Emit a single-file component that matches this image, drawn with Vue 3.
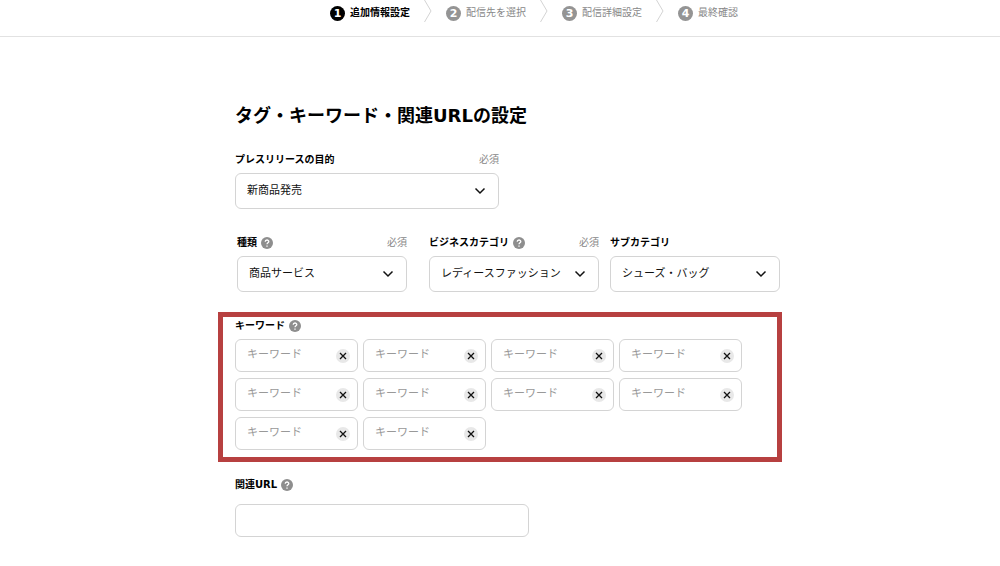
<script setup>
import { ref } from 'vue'

const steps = ['追加情報設定', '配信先を選択', '配信詳細設定', '最終確認']
const keywords = ref(Array.from({ length: 10 }, () => ''))
const url = ref('')

function clearKeyword(index) {
  keywords.value[index] = ''
}
</script>

<template>
  <div class="page">
    <header class="header">
      <ol class="steps">
        <li v-for="(step, i) in steps" :key="step" class="step" :class="{ current: i === 0 }">
          <svg v-if="i > 0" class="separator" viewBox="0 0 8 22" aria-hidden="true">
            <path d="M0.5 0 7 11 0.5 22" />
          </svg>
          <span class="number">{{ i + 1 }}</span>
          <span>{{ step }}</span>
        </li>
      </ol>
    </header>

    <main class="content">
      <h1 class="title">タグ・キーワード・関連URLの設定</h1>

      <div class="field purpose">
        <div class="label-row">
          <label for="purpose">プレスリリースの目的</label>
          <span class="required">必須</span>
        </div>
        <div class="select-box">
          <select id="purpose"><option>新商品発売</option></select>
          <svg class="chevron" viewBox="0 0 12 8" aria-hidden="true"><path d="M1.5 1.5 6 6 10.5 1.5" /></svg>
        </div>
      </div>

      <div class="categories">
        <div class="field">
          <div class="label-row">
            <label for="kind">種類</label>
            <button class="help" type="button" aria-label="種類のヘルプ">
              <svg viewBox="0 0 12 12"><circle cx="6" cy="6" r="6" /><path d="M4.2 4.8C4.2 2.4 7.8 2.5 7.8 4.6 7.8 5.8 6 5.9 6 7.3M6 8.4V9.7" /></svg>
            </button>
            <span class="required">必須</span>
          </div>
          <div class="select-box">
            <select id="kind"><option>商品サービス</option></select>
            <svg class="chevron" viewBox="0 0 12 8" aria-hidden="true"><path d="M1.5 1.5 6 6 10.5 1.5" /></svg>
          </div>
        </div>
        <div class="category-pair">
          <div class="field">
            <div class="label-row">
              <label for="business">ビジネスカテゴリ</label>
              <button class="help" type="button" aria-label="ビジネスカテゴリのヘルプ">
                <svg viewBox="0 0 12 12"><circle cx="6" cy="6" r="6" /><path d="M4.2 4.8C4.2 2.4 7.8 2.5 7.8 4.6 7.8 5.8 6 5.9 6 7.3M6 8.4V9.7" /></svg>
              </button>
              <span class="required">必須</span>
            </div>
            <div class="select-box">
              <select id="business"><option>レディースファッション</option></select>
              <svg class="chevron" viewBox="0 0 12 8" aria-hidden="true"><path d="M1.5 1.5 6 6 10.5 1.5" /></svg>
            </div>
          </div>
          <div class="field">
            <div class="label-row"><label for="sub">サブカテゴリ</label></div>
            <div class="select-box">
              <select id="sub"><option>シューズ・バッグ</option></select>
              <svg class="chevron" viewBox="0 0 12 8" aria-hidden="true"><path d="M1.5 1.5 6 6 10.5 1.5" /></svg>
            </div>
          </div>
        </div>
      </div>

      <section class="field keywords">
        <div class="label-row">
          <label for="keyword-0">キーワード</label>
          <button class="help" type="button" aria-label="キーワードのヘルプ">
            <svg viewBox="0 0 12 12"><circle cx="6" cy="6" r="6" /><path d="M4.2 4.8C4.2 2.4 7.8 2.5 7.8 4.6 7.8 5.8 6 5.9 6 7.3M6 8.4V9.7" /></svg>
          </button>
        </div>
        <div class="keyword-grid">
          <div v-for="(_, i) in keywords" :key="i" class="keyword">
            <input :id="`keyword-${i}`" v-model="keywords[i]" type="text" placeholder="キーワード" :aria-label="`キーワード ${i + 1}`" />
            <button class="clear" type="button" aria-label="クリア" @click="clearKeyword(i)">
              <svg viewBox="0 0 14 14"><path d="M4 4 10 10M10 4 4 10" /></svg>
            </button>
          </div>
        </div>
      </section>

      <div class="field related">
        <div class="label-row">
          <label for="url">関連URL</label>
          <button class="help" type="button" aria-label="関連URLのヘルプ">
            <svg viewBox="0 0 12 12"><circle cx="6" cy="6" r="6" /><path d="M4.2 4.8C4.2 2.4 7.8 2.5 7.8 4.6 7.8 5.8 6 5.9 6 7.3M6 8.4V9.7" /></svg>
          </button>
        </div>
        <input id="url" v-model="url" class="url" type="text" />
      </div>
    </main>
  </div>
</template>

<style>
body {
  margin: 0;
  background: #fff;
}
</style>

<style scoped>
.page,
.page * {
  box-sizing: border-box;
}
.page {
  color: #111;
  font-family: "DejaVu Sans", "Noto Sans CJK JP", sans-serif;
  font-size: 11px;
}
.header {
  padding: 0 0 10px 68px;
  border-bottom: 1px solid #e2e2e2;
}
.steps {
  display: flex;
  justify-content: center;
  margin: 0;
  padding: 0;
  list-style: none;
}
.step {
  display: flex;
  align-items: center;
  gap: 5px;
  height: 26px;
  color: #888;
  font-size: 10px;
  line-height: 16px;
  white-space: nowrap;
}
.step.current {
  color: #000;
  font-weight: 700;
}
.separator {
  align-self: flex-start;
  width: 8px;
  height: 22px;
  margin: 0 9px 0 14px;
  fill: none;
  stroke: #d4d4d4;
}
.number {
  width: 15px;
  height: 15px;
  border-radius: 50%;
  background: #949494;
  color: #fff;
  font-size: 11px;
  font-weight: 700;
  line-height: 15px;
  text-align: center;
}
.current .number {
  background: #000;
}
.content {
  max-width: 564px;
  margin: 66px auto 0;
  padding-bottom: 24px;
}
.title {
  margin: 0 17px 23px;
  color: #000;
  font-size: 18px;
  font-weight: 700;
  line-height: 26px;
}
.field {
  display: flex;
  flex-direction: column;
  gap: 5px;
  min-width: 0;
}
.label-row {
  display: flex;
  align-items: center;
  gap: 4px;
  height: 16px;
  color: #000;
  font-size: 10px;
  font-weight: 700;
  line-height: 16px;
  white-space: nowrap;
}
.required {
  margin-left: auto;
  color: #888;
  font-weight: 400;
}
.help,
.clear {
  padding: 0;
  border: 0;
  border-radius: 50%;
  background: none;
}
.help {
  width: 12px;
  height: 12px;
}
.help svg,
.clear svg {
  display: block;
}
.help circle {
  fill: #8e8e8e;
}
.help path {
  fill: none;
  stroke: #fff;
  stroke-width: 1.3;
}
.select-box,
.keyword {
  display: grid;
  align-items: center;
}
.select-box > *,
.keyword > * {
  grid-area: 1 / 1;
}
select,
input {
  width: 100%;
  min-width: 0;
  margin: 0;
  border: 1px solid #d4d4d4;
  border-radius: 6px;
  background: #fff;
  color: #111;
  font: inherit;
}
select {
  height: 36px;
  padding: 0 30px 2px 11px;
  appearance: none;
}
.chevron {
  justify-self: end;
  width: 12px;
  height: 8px;
  margin-right: 13px;
  fill: none;
  stroke: #111;
  stroke-width: 1.5;
  pointer-events: none;
}
.purpose {
  max-width: 264px;
  margin: 0 17px;
}
.categories {
  display: grid;
  grid-template-columns: 170fr 351fr;
  gap: 22px;
  margin: 26px 2px 20px 19px;
}
.category-pair {
  display: grid;
  grid-template-columns: 1fr 1fr;
  gap: 11px;
}
.keywords {
  padding: 1px 12px 7px;
  border: 5px solid #b74040;
}
.keyword-grid {
  display: grid;
  grid-template-columns: repeat(auto-fill, 123px);
  gap: 6px 5px;
}
input {
  height: 33px;
  padding: 0 26px 2px 11px;
}
input::placeholder {
  color: #999;
  opacity: 1;
}
.clear {
  justify-self: end;
  width: 14px;
  height: 14px;
  margin-right: 8px;
  background: #e8e8e8;
}
.clear path {
  fill: none;
  stroke: #111;
  stroke-width: 1.3;
}
.related {
  gap: 11px;
  max-width: 294px;
  margin: 15px 17px 0;
}
</style>
